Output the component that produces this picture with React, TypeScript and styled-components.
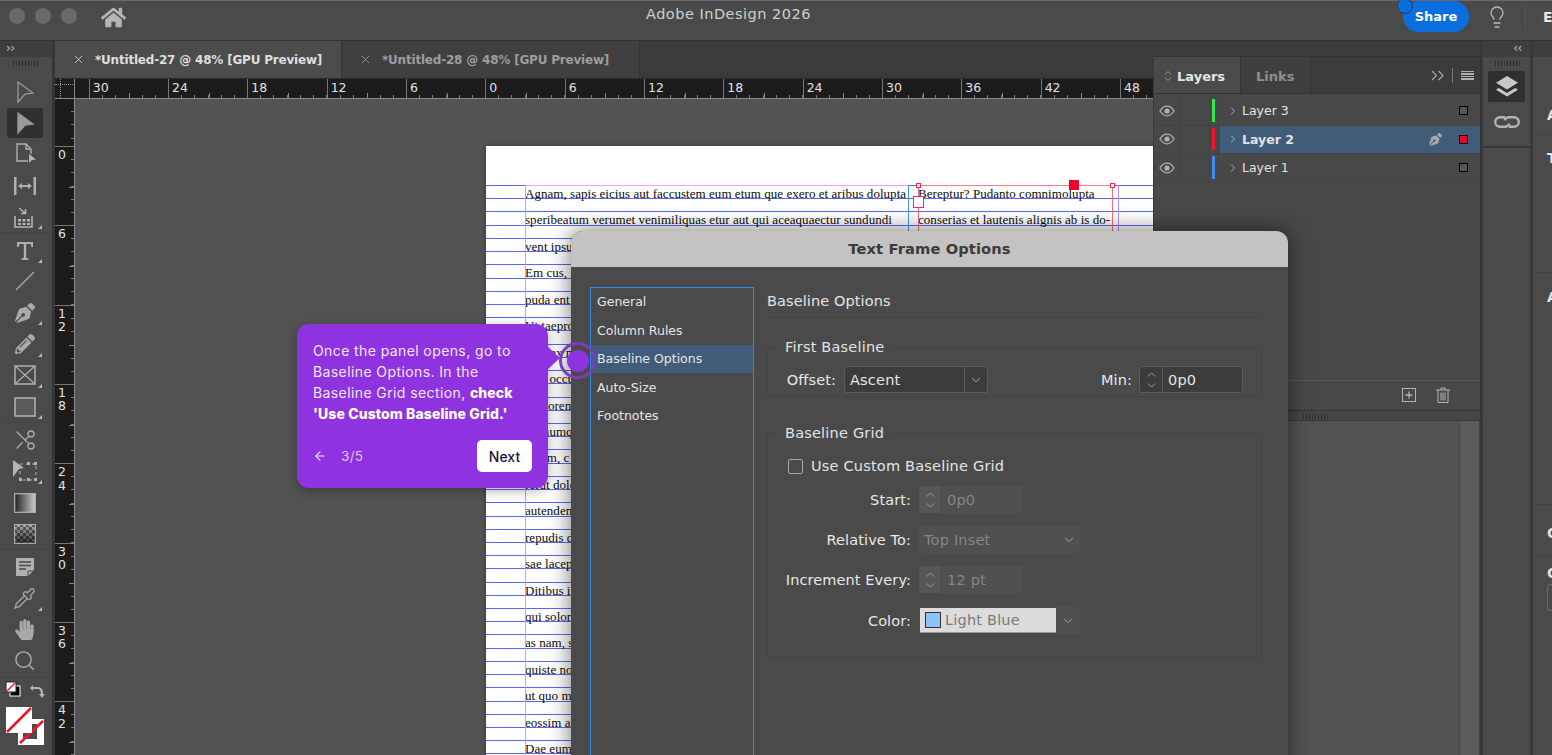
import React from 'react';
import styled, { createGlobalStyle } from 'styled-components';
import { FaHome, FaPenNib, FaPencilAlt, FaHandPaper } from 'react-icons/fa';
import { Lightbulb, Scissors, Search, Pipette, ChevronRight, ChevronDown, ChevronUp, ArrowLeft, X } from 'lucide-react';

const UI = `"DejaVu Sans", "Noto Sans", sans-serif`;

const Global = createGlobalStyle`
  html, body { margin: 0; padding: 0; background: #4a4a4a; overflow: hidden; }
  * { box-sizing: border-box; }
`;

const Screen = styled.div`
  position: relative; width: 1552px; height: 755px; overflow: hidden;
  display: flex; flex-direction: column; background: #4a4a4a; font-family: ${UI}; color: #ddd;
`;

/* ---------- title bar ---------- */
const TitleBar = styled.header`
  height: 41px; flex: none; display: flex; align-items: center; position: relative;
  background: #4a4a4a; border-top: 1px solid #6a6870; border-bottom: 1px solid #333;
  padding-left: 9px;
`;
const Lights = styled.div`display: flex; gap: 10px; margin-top: -9px;`;
const Light = styled.span`width: 16px; height: 16px; border-radius: 50%; background: #696969;`;
const HomeBtn = styled.div`display: flex; margin: -6px 0 0 24px; color: #b4b4b4;`;
const AppTitle = styled.div`
  position: absolute; left: 0; width: 1457px; top: 5px; text-align: center;
  font-size: 14.5px; letter-spacing: .5px; color: #cfcfcf;
`;
const TitleRight = styled.div`margin-left: auto; display: flex; align-items: center; margin-top: -8px;`;
const ShareBtn = styled.div`
  position: relative; width: 66px; height: 31px; border-radius: 16px; background: #0a6ede;
  display: flex; align-items: center; justify-content: center; color: #fff; font-size: 13px; font-weight: 700; padding-left: 0;
  &::before { content: ''; position: absolute; left: -6px; top: -3px; width: 14px; height: 14px; border-radius: 50%; background: #0a6ede; border: 1px solid #2d3a50; }
`;
const Bulb = styled.div`display: flex; margin: 0 16px 0 16px; color: #b9b9b9;`;
const BarSep = styled.span`width: 1px; height: 25px; background: #555; margin-right: 17px;`;
const Clipped = styled.div`width: 9px; overflow: hidden; font-weight: 700; font-size: 14px; color: #e6e6e6;`;

/* ---------- workspace ---------- */
const Workspace = styled.div`flex: 1; min-height: 0; display: flex;`;

const ToolStrip = styled.aside`
  width: 55px; flex: none; background: #4a4a4a; border-right: 3px solid #363636; display: flex; flex-direction: column;
`;
const StripHead = styled.div`
  height: 16px; flex: none; background: #3e3e3e; color: #c0c0c0; font-size: 12px; line-height: 14px; padding-left: 6px; letter-spacing: -.5px;
`;
const Grip = styled.div<{ $w: number }>`
  width: ${p => p.$w}px; height: 5px; flex: none;
  background: repeating-linear-gradient(90deg, #2e2e2e 0 1px, transparent 1px 3px);
`;
const StripGrip = styled(Grip)`margin: 4px 0 10px 13px;`;
const ToolGroup = styled.div`
  display: flex; flex-direction: column; border-bottom: 1px solid #444; margin-bottom: 1px;
`;
const Tool = styled.div<{ $on?: boolean }>`
  position: relative; height: 31.3px; display: flex; align-items: center; justify-content: center; color: #a9a9a9; padding-right: 3px;
  &::before {
    content: ''; position: absolute; left: 7px; right: 9px; top: 1px; bottom: 1px; border-radius: 3px;
    background: ${p => (p.$on ? '#303030' : 'transparent')};
  }
  & > svg { position: relative; }
`;
const Corner = styled.i`
  position: absolute; right: 10px; bottom: 3px; width: 0; height: 0;
  border-left: 4px solid transparent; border-bottom: 4px solid #bbb;
`;
const Swatches = styled.div`position: relative; flex: 1;`;
const MiniSwatch = styled.svg`position: absolute; left: 5px; top: 2px;`;
const Swap = styled.svg`position: absolute; left: 29px; top: 5px;`;
const BigSwatch = styled.svg`position: absolute; left: 5px; top: 28px;`;

const DocArea = styled.div`flex: 1; min-width: 0; display: flex; flex-direction: column; position: relative;`;
const TabBar = styled.div`height: 38px; flex: none; display: flex; background: #3b3b3b; border-bottom: 1px solid #2c2c2c;`;
const DocTab = styled.div<{ $on?: boolean; $w: number }>`
  width: ${p => p.$w}px; display: flex; align-items: center; gap: 10px; padding-left: 17px;
  border-right: 1px solid #333; background: ${p => (p.$on ? '#4c4c4c' : '#404040')};
  color: ${p => (p.$on ? '#dedede' : '#9d9d9d')}; font-weight: 700; font-size: 12px; letter-spacing: -.2px; white-space: nowrap;
`;

const HRuler = styled.div`
  height: 20px; flex: none; display: flex; background: #1c1c1c; border-bottom: 1px solid #8a8a8a; overflow: hidden;
`;
const RulerOrigin = styled.div`
  width: 20px; flex: none; border-right: 1px solid #8a8a8a; position: relative;
  &::before { content: ''; position: absolute; left: 0; right: 1px; top: 5px; border-top: 1px dotted #999; }
  &::after { content: ''; position: absolute; left: 5px; top: 0; bottom: 0; border-left: 1px dotted #999; }
`;
const RulerLead = styled.div`width: 13.7px; flex: none;`;
const HCell = styled.div`
  width: 79.33px; flex: none; font-size: 12.5px; line-height: 18px; padding-left: 3px; color: #e2e2e2;
  border-left: 1px solid #777;
  background:
    linear-gradient(#888, #888) 39.6px 100% / 1px 5px no-repeat,
    repeating-linear-gradient(90deg, transparent 0 12.2px, #777 12.2px 13.22px) 0 100% / 100% 3px no-repeat;
`;
const CanvasRow = styled.div`flex: 1; min-height: 0; display: flex;`;
const VRuler = styled.div`
  width: 20px; flex: none; background: #1c1c1c; border-right: 1px solid #8a8a8a; overflow: hidden; padding-top: 47px;
`;
const VCell = styled.div`
  height: 79.33px; font-size: 12.5px; line-height: 13.5px; padding: 1px 0 0 3px; color: #e2e2e2; border-top: 1px solid #777;
  background:
    linear-gradient(#888, #888) 100% 39.6px / 5px 1px no-repeat,
    repeating-linear-gradient(180deg, transparent 0 12.2px, #777 12.2px 13.22px) 100% 0 / 3px 100% no-repeat;
  span { display: block; }
`;
const VHead = styled.div`
  margin-top: -47px; height: 47px; background:
    repeating-linear-gradient(180deg, transparent 0 12.2px, #777 12.2px 13.22px) 100% 0 / 3px 100% no-repeat;
`;
const Canvas = styled.main`
  flex: 1; min-width: 0; position: relative; overflow: hidden; background: #535353; padding: 47px 0 0 411px;
`;
const Scrollbar = styled.div`
  position: absolute; right: 0; top: 0; bottom: 0; width: 21px; background: #5c5c5c; border-left: 1px solid #474747; border-right: 1px solid #404040;
`;

/* ---------- page ---------- */
const Page = styled.div`
  position: relative; width: 760px; height: 700px; background: #fff; padding: 39px 0 0 39px;
  box-shadow: 0 0 4px rgba(0,0,0,.4);
`;
const GridLines = styled.div`
  position: absolute; inset: 39px 0 0 0;
  background: repeating-linear-gradient(180deg, #5a66ee 0 1px, transparent 1px 13.22px);
`;
const Columns = styled.div`position: relative; display: flex; gap: 12px;`;
const TextCol = styled.div<{ $w: number }>`
  width: ${p => p.$w}px; flex: none; font-family: "Liberation Serif", "Times New Roman", serif;
  font-size: 13px; letter-spacing: .04px; line-height: 26.44px; color: #0c0c0c; white-space: nowrap; overflow: hidden; margin-top: -4px;
`;
const Guide = styled.i<{ $x: number; $c: string }>`
  position: absolute; left: ${p => p.$x}px; top: 39px; bottom: 0; width: 1px; background: ${p => p.$c};
`;
const FrameTop = styled.i`position: absolute; left: 432px; width: 195px; top: 39px; height: 1px; background: #ff7a86;`;
const MarginTop = styled.i`position: absolute; left: 39px; width: 383px; top: 39px; height: 1px; background: #fb9df7;`;
const Handle = styled.i<{ $x: number }>`
  position: absolute; left: ${p => p.$x}px; top: 37px; width: 5px; height: 5px; background: #fff; border: 1px solid #f25;
`;
const RedSquare = styled.i`position: absolute; left: 583px; top: 34px; width: 10px; height: 10px; background: #f0002a;`;
const InPort = styled.i`position: absolute; left: 427px; top: 50px; width: 11px; height: 12px; background: #fff; border: 1px solid #f26;`;

/* ---------- floating layers panel ---------- */
const LayersPanel = styled.section`
  position: absolute; left: 1154px; top: 57px; width: 326px; height: 364px; background: #484848;
  display: flex; flex-direction: column; box-shadow: 0 -1px 0 #333, -1px 0 0 #3a3a3a, 1px 0 0 #333;
`;
const PanelTabs = styled.div`height: 37px; flex: none; display: flex; align-items: center; background: #3b3b3b; border-bottom: 1px solid #333;`;
const PanelTab = styled.div<{ $on?: boolean; $w: number }>`
  width: ${p => p.$w}px; height: 100%; display: flex; align-items: center; gap: 4px; padding: 2px 0 0 ${p => (p.$on ? 9 : 15)}px; font-weight: 700; font-size: 13px;
  color: ${p => (p.$on ? '#e6e6e6' : '#8f8f8f')}; background: ${p => (p.$on ? '#4a4a4a' : '#3f3f3f')}; border-right: 1px solid #353535;
`;
const PanelTools = styled.div`margin-left: auto; display: flex; align-items: center; gap: 8px; padding-right: 6px;`;
const MenuBars = styled.span`
  width: 13px; height: 9px; background: repeating-linear-gradient(180deg, #b0b0b0 0 1.5px, transparent 1.5px 2.5px);
`;
const Divider = styled.span`width: 1px; height: 15px; background: #777;`;
const LayerList = styled.div`flex: 1; padding-top: 3px;`;
const LayerRow = styled.div`height: 28.6px; display: flex; border-bottom: 1px solid #424242;`;
const EyeCell = styled.div`width: 27px; display: flex; align-items: center; justify-content: center; border-right: 1px solid #424242; color: #b0b0b0;`;
const BlankCell = styled.div`width: 29px; border-right: 1px solid #424242;`;
const ColorBar = styled.div`width: 9px; padding: 2px 3px 3px 2px; border-right: 1px solid #424242; display: flex;
  span { flex: 1; }
`;
const NameCell = styled.div<{ $on?: boolean }>`
  flex: 1; display: flex; align-items: center; padding: 0 12px 0 7px; gap: 3px; margin-left: 1px; font-size: 12.5px;
  background: ${p => (p.$on ? '#405c78' : 'transparent')}; font-weight: ${p => (p.$on ? 700 : 400)}; color: #e2e2e2;
`;
const Proxy = styled.i<{ $on?: boolean }>`
  margin-left: 14px; width: 9px; height: 9px; border: 1.5px solid #000; background: ${p => (p.$on ? '#f0002a' : '#555')};
`;
const NameLabel = styled.span`margin-right: auto;`;
const PanelFoot = styled.div`
  height: 31px; flex: none; display: flex; align-items: center; justify-content: flex-end; gap: 20px; padding: 0 30px 2px 0;
  border-top: 1px solid #555; color: #b0b0b0; border-bottom: 1px solid #333;
`;
const PanelGrip = styled.div`height: 10px; flex: none; padding: 3px 0 0 149px; background: #464646; border-bottom: 1px solid #383838;`;

/* ---------- right dock ---------- */
const Dock = styled.aside`
  width: 72px; flex: none; display: flex; border-left: 3px solid #383838; background: #4a4a4a;
`;
const DockStrip = styled.div`width: 47px; flex: none; display: flex; flex-direction: column; border-right: 3px solid #383838; box-sizing: content-box;`;
const DockHead = styled.div`height: 16px; flex: none; background: #3e3e3e; color: #c0c0c0; font-size: 12px; line-height: 14px; text-align: center; letter-spacing: -.5px; padding-left: 22px;`;
const DockGrip = styled(Grip)`margin: 4px 0 5px 12px;`;
const DockBtn = styled.div<{ $on?: boolean }>`
  width: 37px; height: 31px; margin-left: 5px; display: flex; align-items: center; justify-content: center; color: #c4c4c4; border-radius: 2px;
  background: ${p => (p.$on ? '#303030' : 'transparent')};
`;
const DockLink = styled(DockBtn)`height: 40px; margin-bottom: 4px;`;
const DockSep = styled.div`border-top: 2px solid #383838;`;
const PropCol = styled.div`flex: 1; min-width: 0; overflow: hidden; display: flex; flex-direction: column; font-size: 14px; line-height: 18px; font-weight: 700; color: #e6e6e6;`;
const PropHead = styled.div`height: 16px; flex: none; background: #3e3e3e;`;
const PropSection = styled.div<{ $h: number; $pad: number }>`height: ${p => p.$h}px; flex: none; padding: ${p => p.$pad}px 0 0 14px; border-bottom: 1px solid #424242; white-space: nowrap;`;
const PropPlain = styled.div`flex: none; padding: 7px 0 0 14px;`;
const PropInput = styled.div`width: 30px; height: 27px; margin: 2px 0 0 14px; border: 1px solid #666; border-radius: 3px;`;

/* ---------- dialog ---------- */
const Dialog = styled.section`
  position: absolute; left: 571px; top: 231px; width: 717px; height: 540px; border-radius: 12px 12px 0 0; background: #4a4a4a;
  box-shadow: 0 0 22px rgba(0,0,0,.55); display: flex; flex-direction: column;
`;
const DialogTitle = styled.div`
  height: 36px; flex: none; display: flex; align-items: center; justify-content: center; background: #c4c3c1; border-radius: 12px 12px 0 0;
  font-weight: 700; font-size: 14.7px; color: #3b3b3b; letter-spacing: .1px; padding-bottom: 2px;
`;
const DialogBody = styled.div`flex: 1; min-height: 0; display: flex; padding: 20px 26px 0 19px; gap: 13px;`;
const NavList = styled.nav`
  width: 164px; flex: none; border: 1.5px solid #2a8be0; display: flex; flex-direction: column;
`;
const NavItem = styled.div<{ $on?: boolean }>`
  height: 28.5px; display: flex; align-items: center; padding-left: 6px; font-size: 12.5px; color: #e6e6e6;
  background: ${p => (p.$on ? '#405c78' : 'transparent')};
`;
const NavSpacer = styled.div`margin-top: -.5px;`;
const Pane = styled.div`flex: 1; min-width: 0; display: flex; flex-direction: column;`;
const PaneTitle = styled.div`
  height: 31px; flex: none; padding-top: 6px; font-size: 14.5px; color: #e4e4e4; border-bottom: 1px solid #434343; letter-spacing: .1px;
`;
const Fieldset = styled.div<{ $h: number; $mt: number }>`
  position: relative; height: ${p => p.$h}px; margin-top: ${p => p.$mt}px; border: 1px solid #434343; border-radius: 2px;
  display: flex; flex-direction: column;
`;
const Legend = styled.div`
  position: absolute; left: 11px; top: -10px; padding: 0 6px; background: #4a4a4a; font-size: 14.5px; line-height: 18px; letter-spacing: .2px; color: #e2e2e2;
`;
const FieldRow = styled.div<{ $mt?: number }>`
  display: flex; align-items: center; margin-top: ${p => p.$mt ?? 0}px; height: 27px; flex: none;
`;
const Label = styled.span<{ $w?: number }>`
  width: ${p => (p.$w ? `${p.$w}px` : 'auto')}; text-align: right; font-size: 14.5px; letter-spacing: .1px; color: #e8e8e8; flex: none; white-space: nowrap;
`;
const Control = styled.div<{ $w: number; $off?: boolean }>`
  width: ${p => p.$w}px; height: 27px; display: flex; align-items: center; flex: none; border-radius: 3px; overflow: hidden;
  background: ${p => (p.$off ? '#505050' : '#3c3c3c')}; border: ${p => (p.$off ? 'none' : '1px solid #5c5c5c')};
  color: ${p => (p.$off ? '#858585' : '#e6e6e6')}; font-size: 14.5px; letter-spacing: .2px;
`;
const Spin = styled.div<{ $off?: boolean }>`
  width: 23px; height: 100%; flex: none; display: flex; flex-direction: column; align-items: center; justify-content: center;
  color: #b8b8b8; border-right: 1px solid ${p => (p.$off ? '#4a4a4a' : '#5c5c5c')};
  background: ${p => (p.$off ? '#565656' : 'transparent')};
  svg { margin: -1px 0; }
`;
const CtlText = styled.span`flex: 1; padding-left: 5px; white-space: nowrap;`;
const CtlCaret = styled.span<{ $line?: boolean }>`
  width: 23px; height: 100%; display: flex; align-items: center; justify-content: center; color: #c4c4c4; flex: none;
  border-left: ${p => (p.$line ? '1px solid #5c5c5c' : 'none')};
`;
const Check = styled.i`width: 15px; height: 15px; border: 1px solid #a9a9a9; border-radius: 2px; margin: 0 8px 0 20px; flex: none;`;
const CheckLabel = styled.span`font-size: 14.5px; letter-spacing: .2px; color: #e4e4e4;`;
const ColorCtl = styled.div`
  width: 136px; height: 25px; background: #dcdcdc; display: flex; align-items: center; gap: 4px; padding-left: 5px;
  border-bottom: 1px solid #999; font-size: 14.5px; letter-spacing: .2px; color: #7a7a7a; white-space: nowrap; flex: none;
`;
const Chip = styled.i`width: 16px; height: 16px; background: #8cc4fa; border: 1.5px solid #333;`;
const ColorCaret = styled.span`
  width: 24px; height: 27px; background: #505050; display: flex; align-items: center; justify-content: center; color: #bbb; border-radius: 0 3px 3px 0;
`;
const RowGap = styled.span<{ $w: number }>`width: ${p => p.$w}px; flex: none;`;

/* ---------- walkthrough tooltip ---------- */
const Coach = styled.div`
  position: absolute; left: 297px; top: 324px; width: 251px; height: 164px; background: #8f33e0; border-radius: 12px;
  padding: 16px 16px 16px; display: flex; flex-direction: column; font-family: Inter, "Open Sans", sans-serif;
  box-shadow: 0 3px 12px rgba(0,0,0,.3); color: #f2e6fc;
  &::after {
    content: ''; position: absolute; left: 250px; top: 22px; width: 0; height: 0;
    border-top: 12px solid transparent; border-bottom: 12px solid transparent; border-left: 13px solid #8f33e0;
  }
`;
const CoachText = styled.p`margin: 0; font-size: 14px; line-height: 21px; letter-spacing: .4px; white-space: nowrap; b { font-weight: 800; color: #fff; letter-spacing: .1px; }`;
const CoachFoot = styled.div`margin-top: auto; display: flex; align-items: center;`;
const Steps = styled.span`font-size: 13.5px; color: #ddc4f5; margin-left: 14px; letter-spacing: .3px;`;
const NextBtn = styled.div`
  margin-left: auto; width: 55px; height: 32px; border-radius: 5px; background: #fff; color: #1c1440; font-size: 14px; font-weight: 500;
  display: flex; align-items: center; justify-content: center;
`;
const Beacon = styled.div`
  position: absolute; left: 559px; top: 342px; width: 37px; height: 37px; border-radius: 50%; border: 3px solid #7b3cc0;
  display: flex; align-items: center; justify-content: center;
  &::before { content: ''; width: 22px; height: 22px; border-radius: 50%; background: #8f33e0; }
`;

/* ---------- data ---------- */
const hLabels = ['30','24','18','12','6','0','6','12','18','24','30','36','42','48','54','60','66','72'];
const vLabels = ['0','6','12','18','24','30','36','42'];
const leftText = [
  'Agnam, sapis eicius aut faccustem eum etum que exero et aribus dolupta',
  'speribeatum verumet venimiliquas etur aut qui aceaquaectur sundundi',
  'vent ipsum quiam', 'Em cus, ipsam', 'puda ent lorem', 'Ut taepro dolor', 'sunt ex magnis', 'enis occu sapis',
  'aut lorem sit', 'est numquam', 'ipsum, c sapien', 'rerut dolor', 'autenden sit', 'repudis dolor', 'sae lacepta',
  'Ditibus ipsum', 'qui solorem', 'as nam, sit', 'quiste nobis', 'ut quo magna', 'eossim aut', 'Dae eum quis',
];
const rightText = ['Bereptur? Pudanto comnimolupta', 'conserias et lautenis alignis ab is do-'];
const layers = [
  { name: 'Layer 3', color: '#2fe84e' },
  { name: 'Layer 2', color: '#f0142d', on: true },
  { name: 'Layer 1', color: '#3d8df0' },
];

/* ---------- drawn icons ---------- */
const Arrow = ({ filled }: { filled?: boolean }) => (
  <svg width="22" height="24" viewBox="0 0 22 24"><path d="M4 2 L19 13 L11 14 L4 22 Z" fill={filled ? '#9a9a9a' : 'none'} stroke="#9a9a9a" strokeWidth="1.3" /></svg>
);
const PageTool = () => (
  <svg width="24" height="24" viewBox="0 0 24 24" fill="none" stroke="#b4b4b4" strokeWidth="1.3"><path d="M15 19H4V2h9l5 5v5M13 2v5h5" /><path d="M16 12l7 5.5-4 .5-3 3z" fill="#b4b4b4" stroke="none" /></svg>
);
const GapTool = () => (
  <svg width="24" height="24" viewBox="0 0 24 24" fill="#b0b0b0"><rect x="1" y="3" width="2.5" height="18" /><rect x="20.5" y="3" width="2.5" height="18" /><path d="M5 12l4-3v2h6V9l4 3-4 3v-2H9v2z" /></svg>
);
const Collector = () => (
  <svg width="24" height="24" viewBox="0 0 24 24" fill="none" stroke="#b4b4b4" strokeWidth="1.6"><path d="M2 11v11h17V11" /><path d="M6 3l6 5M8 8.5h4.5V4" /><g fill="#b4b4b4" stroke="none"><rect x="5" y="14" width="3" height="2.5" /><rect x="9.5" y="14" width="3" height="2.5" /><rect x="14" y="14" width="3" height="2.5" /><rect x="5" y="18" width="3" height="2" /><rect x="9.5" y="18" width="3" height="2" /><rect x="14" y="18" width="3" height="2" /></g></svg>
);
const TypeTool = () => (
  <svg width="24" height="24" viewBox="0 0 24 24" fill="#b0b0b0"><path d="M4 4h16v5h-1.6l-.8-3H13.2v14l2.4.6V22H8.4v-1.4l2.4-.6V6H6.4l-.8 3H4z" /></svg>
);
const LineTool = () => (
  <svg width="24" height="24" viewBox="0 0 24 24" stroke="#a8a8a8" strokeWidth="1.5"><path d="M3 21L21 3" /></svg>
);
const FrameX = () => (
  <svg width="22" height="20" viewBox="0 0 22 20" fill="none" stroke="#b0b0b0" strokeWidth="1.5"><rect x="1" y="1" width="20" height="18" /><path d="M1 1l20 18M21 1L1 19" strokeWidth="1.1" /></svg>
);
const RectTool = () => (
  <svg width="22" height="20" viewBox="0 0 22 20" fill="#595959" stroke="#b4b4b4" strokeWidth="1.5"><rect x="1" y="1" width="20" height="18" /></svg>
);
const FreeTransform = () => (
  <svg width="26" height="24" viewBox="0 0 26 24" fill="none" stroke="#b0b0b0" strokeWidth="1"><path d="M8 5h16v16H8z" strokeDasharray="3 3" /><path d="M1 1l11 8-5 1-6 8z" fill="#b4b4b4" stroke="none" /><g fill="#b4b4b4" stroke="none"><rect x="22" y="3" width="3" height="3" /><rect x="22" y="19" width="3" height="3" /><rect x="7" y="19" width="3" height="3" /><rect x="15" y="3" width="3" height="3" /><rect x="15" y="19" width="3" height="3" /></g></svg>
);
const GradientTool = () => (
  <svg width="22" height="20" viewBox="0 0 22 20"><defs><linearGradient id="gr"><stop offset="0" stopColor="#222" /><stop offset="1" stopColor="#ccc" /></linearGradient></defs><rect x=".7" y=".7" width="20.6" height="18.6" fill="url(#gr)" stroke="#b4b4b4" strokeWidth="1.2" /></svg>
);
const FeatherTool = () => (
  <svg width="22" height="20" viewBox="0 0 22 20"><defs><linearGradient id="fe" x1="0" y1="0" x2="0" y2="1"><stop offset="0" stopColor="#aaa" /><stop offset="1" stopColor="#333" /></linearGradient><pattern id="ck" width="6" height="6" patternUnits="userSpaceOnUse"><rect width="3" height="3" fill="#000" opacity=".45" /><rect x="3" y="3" width="3" height="3" fill="#000" opacity=".45" /></pattern></defs><rect x=".7" y=".7" width="20.6" height="18.6" fill="url(#fe)" stroke="#b4b4b4" strokeWidth="1.2" /><rect x="1" y="1" width="20" height="18" fill="url(#ck)" /></svg>
);
const NoteTool = () => (
  <svg width="20" height="20" viewBox="0 0 20 20"><path d="M1 1h18v12l-6 6H1z" fill="#b0b0b0" /><path d="M4 5h12M4 8.5h12M4 12h7" stroke="#4a4a4a" strokeWidth="1.4" /><path d="M13 19v-5h6" fill="none" stroke="#4a4a4a" strokeWidth="1" /></svg>
);
const EyeIcon = () => (
  <svg width="16" height="12" viewBox="0 0 16 12" fill="none"><path d="M1 6c2-3.2 4.4-4.8 7-4.8S13 2.800 15 6c-2 3.200-4.400 4.800-7 4.800S3 9.200 1 6z" stroke="#b0b0b0" strokeWidth="1.3" /><circle cx="8" cy="6" r="2.600" fill="#b0b0b0" /></svg>
);
const LayersIcon = () => (
  <svg width="24" height="24" viewBox="0 0 24 24" fill="#c8c8c8"><path d="M12 1l11 6.800-11 6.800L1 7.800z" /><path d="M3.800 13l8.200 5.100 8.200-5.100 2.800 1.800-11 6.800-11-6.800z" /></svg>
);
const LinkIcon = () => (
  <svg width="26" height="14" viewBox="0 0 26 14" fill="none" stroke="#b4b4b4" strokeWidth="2.400"><path d="M11 2.200H6a4.800 4.800 0 0 0 0 9.600h5a4.800 4.800 0 0 0 4.400-3" /><path d="M15 11.800h5a4.800 4.800 0 0 0 0-9.600h-5a4.800 4.800 0 0 0-4.400 3" /></svg>
);
const TrashIcon = () => (
  <svg width="14" height="16" viewBox="0 0 14 16" fill="none" stroke="#b4b4b4" strokeWidth="1"><path d="M0 3h14M5 3V1h4v2M2 3v12.500h10V3M5 5.500v8M7 5.500v8M9 5.500v8" /></svg>
);
const AddIcon = () => (
  <svg width="14" height="14" viewBox="0 0 14 14" fill="none" stroke="#b4b4b4"><rect x=".5" y=".5" width="13" height="13" /><path d="M3.500 7h7M7 3.500v7" strokeWidth="1.3" /></svg>
);
const Updown = () => (
  <svg width="10" height="12" viewBox="0 0 10 12" fill="none" stroke="#9c9c9c"><path d="M2 4.500L5 1.500l3 3M2 7.500l3 3 3-3" /></svg>
);
const DoubleChevron = () => (
  <svg width="13" height="11" viewBox="0 0 13 11" fill="none" stroke="#aaa" strokeWidth="1.100"><path d="M1 1l4.500 4.500L1 10M7.500 1L12 5.500 7.500 10" /></svg>
);

const tools: { key: string; icon: React.ReactNode; on?: boolean; corner?: boolean }[][] = [
  [
    { key: 'direct', icon: <Arrow /> },
    { key: 'select', icon: <Arrow filled />, on: true },
    { key: 'page', icon: <PageTool /> },
    { key: 'gap', icon: <GapTool /> },
    { key: 'collector', icon: <Collector />, corner: true },
  ],
  [
    { key: 'type', icon: <TypeTool />, corner: true },
    { key: 'line', icon: <LineTool /> },
    { key: 'pen', icon: <FaPenNib size={20} />, corner: true },
    { key: 'pencil', icon: <FaPencilAlt size={20} />, corner: true },
    { key: 'frame', icon: <FrameX />, corner: true },
    { key: 'rect', icon: <RectTool />, corner: true },
  ],
  [
    { key: 'scissors', icon: <Scissors size={24} strokeWidth={1.4} style={{ transform: 'scaleX(-1)' }} /> },
    { key: 'transform', icon: <FreeTransform />, corner: true },
    { key: 'gradient', icon: <GradientTool /> },
    { key: 'feather', icon: <FeatherTool /> },
  ],
  [
    { key: 'note', icon: <NoteTool /> },
    { key: 'dropper', icon: <Pipette size={23} strokeWidth={1.4} />, corner: true },
    { key: 'hand', icon: <FaHandPaper size={21} /> },
    { key: 'zoom', icon: <Search size={23} strokeWidth={1.5} /> },
  ],
];

const Stepper = ({ off }: { off?: boolean }) => (
  <Spin $off={off}><ChevronUp size={13} strokeWidth={1.4} /><ChevronDown size={13} strokeWidth={1.4} /></Spin>
);

export default function App() {
  return (
    <Screen>
      <Global />
      <TitleBar>
        <Lights><Light /><Light /><Light /></Lights>
        <HomeBtn><FaHome size={25} /></HomeBtn>
        <AppTitle>Adobe InDesign 2026</AppTitle>
        <TitleRight>
          <ShareBtn>Share</ShareBtn>
          <Bulb><Lightbulb size={24} strokeWidth={1.3} /></Bulb>
          <BarSep />
          <Clipped>E</Clipped>
        </TitleRight>
      </TitleBar>

      <Workspace>
        <ToolStrip>
          <StripHead>››</StripHead>
          <StripGrip $w={25} />
          {tools.map((group, i) => (
            <ToolGroup key={i}>
              {group.map(t => (
                <Tool key={t.key} $on={t.on}>{t.icon}{t.corner && <Corner />}</Tool>
              ))}
            </ToolGroup>
          ))}
          <Swatches>
            <MiniSwatch width="16" height="16" viewBox="0 0 16 16">
              <rect x="5" y="5" width="10" height="10" fill="#000" stroke="#fff" />
              <rect x="1" y="1" width="10" height="10" fill="#fff" stroke="#222" />
              <path d="M2 10l8-8" stroke="#f0142d" strokeWidth="1.5" />
            </MiniSwatch>
            <Swap width="16" height="16" viewBox="0 0 16 16" fill="none" stroke="#b4b4b4" strokeWidth="2.200">
              <path d="M3 4h6c3 0 4 2 4 6" /><path d="M1 4l3-3v6zM13 14l-3-4h6z" fill="#b4b4b4" stroke="none" />
            </Swap>
            <BigSwatch width="40" height="40" viewBox="0 0 40 40">
              <rect x="13" y="12" width="26" height="26" fill="#fff" />
              <rect x="18" y="17" width="14" height="15" fill="#4a4a4a" />
              <path d="M15 36L38 14" stroke="#f0142d" strokeWidth="2.500" />
              <rect x="1" y="0" width="26" height="26" fill="#fff" />
              <path d="M2 25L26 1" stroke="#f0142d" strokeWidth="2.500" />
            </BigSwatch>
          </Swatches>
        </ToolStrip>

        <DocArea>
          <TabBar>
            <DocTab $on $w={287}><X size={13} strokeWidth={1.5} />*Untitled-27 @ 48% [GPU Preview]</DocTab>
            <DocTab $w={298}><X size={13} strokeWidth={1.5} />*Untitled-28 @ 48% [GPU Preview]</DocTab>
          </TabBar>
          <HRuler>
            <RulerOrigin /><RulerLead />
            {hLabels.map((l, i) => <HCell key={i}>{l}</HCell>)}
          </HRuler>
          <CanvasRow>
            <VRuler>
              <VHead />
              {vLabels.map(l => <VCell key={l}>{l.split('').map((c, i) => <span key={i}>{c}</span>)}</VCell>)}
            </VRuler>
            <Canvas>
              <Page>
                <GridLines />
                <Columns>
                  <TextCol $w={381}>{leftText.map(t => <div key={t}>{t}</div>)}</TextCol>
                  <TextCol $w={200}>{rightText.map(t => <div key={t}>{t}</div>)}</TextCol>
                </Columns>
                <Guide $x={39} $c="#c9a2ef" />
                <Guide $x={422} $c="#3a9af0" />
                <Guide $x={432} $c="#ff6b7a" />
                <Guide $x={626} $c="#ff6b7a" />
                <Guide $x={632} $c="#b78df0" />
                <MarginTop />
                <FrameTop />
                <Handle $x={430} />
                <Handle $x={624} />
                <RedSquare />
                <InPort />
              </Page>
              <Scrollbar />
            </Canvas>
          </CanvasRow>
        </DocArea>

        <Dock>
          <DockStrip>
            <DockHead>‹‹</DockHead>
            <DockGrip $w={25} />
            <DockBtn $on><LayersIcon /></DockBtn>
            <DockLink><LinkIcon /></DockLink>
            <DockSep />
          </DockStrip>
          <PropCol>
            <PropHead />
            <PropSection $h={78} $pad={49}>A</PropSection>
            <PropSection $h={138} $pad={14}>T</PropSection>
            <PropSection $h={232} $pad={15}>A</PropSection>
            <PropSection $h={52} $pad={19}>C</PropSection>
            <PropPlain>C</PropPlain>
            <PropInput />
          </PropCol>
        </Dock>
      </Workspace>

      <LayersPanel>
        <PanelTabs>
          <PanelTab $on $w={87}><Updown />Layers</PanelTab>
          <PanelTab $w={70}>Links</PanelTab>
          <PanelTools><DoubleChevron /><Divider /><MenuBars /></PanelTools>
        </PanelTabs>
        <LayerList>
          {layers.map(l => (
            <LayerRow key={l.name}>
              <EyeCell><EyeIcon /></EyeCell>
              <BlankCell />
              <ColorBar><span style={{ background: l.color }} /></ColorBar>
              <NameCell $on={l.on}>
                <ChevronRight size={12} strokeWidth={1.3} />
                <NameLabel>{l.name}</NameLabel>
                {l.on && <FaPenNib size={13} color="#a8a8a8" />}
                <Proxy $on={l.on} />
              </NameCell>
            </LayerRow>
          ))}
        </LayerList>
        <PanelFoot><AddIcon /><TrashIcon /></PanelFoot>
        <PanelGrip><Grip $w={25} /></PanelGrip>
      </LayersPanel>

      <Dialog>
        <DialogTitle>Text Frame Options</DialogTitle>
        <DialogBody>
          <NavList>
            <NavSpacer />
            <NavItem>General</NavItem>
            <NavItem>Column Rules</NavItem>
            <NavItem $on>Baseline Options</NavItem>
            <NavItem>Auto-Size</NavItem>
            <NavItem>Footnotes</NavItem>
          </NavList>
          <Pane>
            <PaneTitle>Baseline Options</PaneTitle>
            <Fieldset $h={50} $mt={29}>
              <Legend>First Baseline</Legend>
              <FieldRow $mt={18}>
                <Label $w={68}>Offset:</Label>
                <RowGap $w={8} />
                <Control $w={144}><CtlText>Ascent</CtlText><CtlCaret $line><ChevronDown size={14} strokeWidth={1.5} /></CtlCaret></Control>
                <RowGap $w={113} />
                <Label>Min:</Label>
                <RowGap $w={7} />
                <Control $w={104}><Stepper /><CtlText>0p0</CtlText></Control>
              </FieldRow>
            </Fieldset>
            <Fieldset $h={225} $mt={36}>
              <Legend>Baseline Grid</Legend>
              <FieldRow $mt={18.5}>
                <Check /><CheckLabel>Use Custom Baseline Grid</CheckLabel>
              </FieldRow>
              <FieldRow $mt={6.5}>
                <Label $w={143}>Start:</Label><RowGap $w={8} />
                <Control $w={104} $off><Stepper off /><CtlText>0p0</CtlText></Control>
              </FieldRow>
              <FieldRow $mt={13}>
                <Label $w={143}>Relative To:</Label><RowGap $w={8} />
                <Control $w={161} $off><CtlText>Top Inset</CtlText><CtlCaret><ChevronDown size={14} strokeWidth={1.3} /></CtlCaret></Control>
              </FieldRow>
              <FieldRow $mt={13}>
                <Label $w={143}>Increment Every:</Label><RowGap $w={8} />
                <Control $w={104} $off><Stepper off /><CtlText>12 pt</CtlText></Control>
              </FieldRow>
              <FieldRow $mt={14}>
                <Label $w={143}>Color:</Label><RowGap $w={9} />
                <ColorCtl><Chip />Light Blue</ColorCtl>
                <ColorCaret><ChevronDown size={14} strokeWidth={1.3} /></ColorCaret>
              </FieldRow>
            </Fieldset>
          </Pane>
        </DialogBody>
      </Dialog>

      <Coach>
        <CoachText>
          Once the panel opens, go to<br />
          Baseline Options. In the<br />
          Baseline Grid section, <b>check</b><br />
          <b>'Use Custom Baseline Grid.'</b>
        </CoachText>
        <CoachFoot>
          <ArrowLeft size={14} strokeWidth={2} />
          <Steps>3/5</Steps>
          <NextBtn>Next</NextBtn>
        </CoachFoot>
      </Coach>
      <Beacon />
    </Screen>
  );
}
